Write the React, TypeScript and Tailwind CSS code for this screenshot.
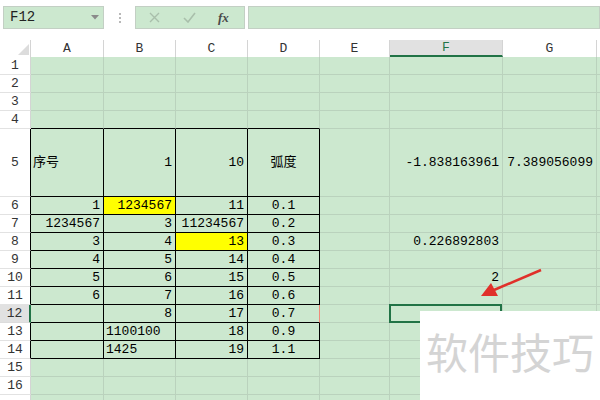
import React from "react";

type Cell = { t: string; a?: "l" | "r" | "c"; y?: boolean };

const cols = ["A", "B", "C", "D", "E", "F", "G"];
const font = { fontFamily: '"Liberation Mono", "Noto Sans CJK SC", monospace' };

const data: Record<number, Record<string, Cell>> = {
  5: { A: { t: "序号", a: "l" }, B: { t: "1" }, C: { t: "10" }, D: { t: "弧度", a: "c" }, F: { t: "-1.838163961" }, G: { t: "7.389056099" } },
  6: { A: { t: "1" }, B: { t: "1234567", y: true }, C: { t: "11" }, D: { t: "0.1", a: "c" } },
  7: { A: { t: "1234567" }, B: { t: "3" }, C: { t: "11234567" }, D: { t: "0.2", a: "c" } },
  8: { A: { t: "3" }, B: { t: "4" }, C: { t: "13", y: true }, D: { t: "0.3", a: "c" }, F: { t: "0.226892803" } },
  9: { A: { t: "4" }, B: { t: "5" }, C: { t: "14" }, D: { t: "0.4", a: "c" } },
  10: { A: { t: "5" }, B: { t: "6" }, C: { t: "15" }, D: { t: "0.5", a: "c" }, F: { t: "2" } },
  11: { A: { t: "6" }, B: { t: "7" }, C: { t: "16" }, D: { t: "0.6", a: "c" } },
  12: { B: { t: "8" }, C: { t: "17" }, D: { t: "0.7", a: "c" } },
  13: { B: { t: "1100100", a: "l" }, C: { t: "18" }, D: { t: "0.9", a: "c" } },
  14: { B: { t: "1425", a: "l" }, C: { t: "19" }, D: { t: "1.1", a: "c" } },
};

const rows = Array.from({ length: 17 }, (_, i) => i + 1);
const gridCols = "grid grid-cols-[31px_73px_72px_72px_72px_70px_113px_94px_1fr]";

function cellClass(r: number, ci: number, cell?: Cell) {
  const inTable = r >= 5 && r <= 14 && ci <= 3;
  const topEdge = r === 4 && ci <= 3;
  const align =
    cell?.a === "l" ? "justify-start pl-[2px]" : cell?.a === "c" ? "justify-center" : "justify-end pr-[3px]";
  const bg = cell?.y ? "bg-[#ffff00]" : "bg-[#cce8cf]";
  const right =
    r === 12 && ci === 3
      ? "border-r-[#f08a7a]"
      : inTable
        ? "border-r-black"
        : "border-r-[#bad2bd]";
  const bottom = inTable || topEdge ? "border-b-black" : "border-b-[#bad2bd]";
  return `relative flex items-center border-r border-b ${right} ${bottom} ${bg} ${align}`;
}

function Sheet() {
  return (
    <div className="text-[13px] leading-none text-black" style={font}>
      <div className={`${gridCols} h-[17px] bg-white text-[#333]`}>
        <div className="relative border-r border-[#d4d4d4]">
          <svg className="absolute left-[18px] top-[4px]" width="11" height="11" viewBox="0 0 11 11">
            <path d="M11 0 L11 11 L0 11 Z" fill="#dcdcdc" />
          </svg>
        </div>
        {cols.map((c) => (
          <div
            key={c}
            className={
              c === "F"
                ? "flex items-center justify-center border-r border-[#d4d4d4] border-b-2 border-b-[#217346] bg-[#e1e1e1] text-[#217346]"
                : "flex items-center justify-center border-r border-[#d4d4d4]"
            }
          >
            {c}
          </div>
        ))}
        <div />
      </div>
      {rows.map((r) => (
        <div key={r} className={`${gridCols} ${r === 5 ? "h-[68px]" : "h-[18px]"}`}>
          <div
            className={
              r === 12
                ? "flex items-center justify-center border-b border-b-[#dcdcdc] border-r-2 border-r-[#217346] bg-[#e1e1e1] text-[#333]"
                : r >= 5 && r <= 14
                  ? "flex items-center justify-center border-b border-b-[#e2e2e2] border-r border-r-black bg-white text-[#333]"
                  : "flex items-center justify-center border-b border-b-[#e2e2e2] border-r border-r-[#d4d4d4] bg-white text-[#333]"
            }
          >
            {r < 17 ? r : null}
          </div>
          {cols.map((c, ci) => {
            const cell = data[r]?.[c];
            return (
              <div key={c} className={cellClass(r, ci, cell)}>
                <span className="whitespace-nowrap">{cell?.t}</span>
                {r === 12 && c === "F" && (
                  <div className="absolute -left-[1px] -top-[1px] z-10 h-[calc(100%+2px)] w-[calc(100%+1px)] border-2 border-[#217346]" />
                )}
              </div>
            );
          })}
          <div className="border-b border-[#bad2bd] bg-[#cce8cf]" />
        </div>
      ))}
    </div>
  );
}

function FormulaBar() {
  return (
    <div className="flex h-[40px] items-start bg-white pl-[3px] pt-[6px]" style={font}>
      <div className="flex h-[23px] w-[101px] items-center justify-between border border-[#c3cfc4] bg-[#cce8cf] pl-[6px] pr-[4px] text-[14px] text-[#222]">
        <span>F12</span>
        <svg width="8" height="5" viewBox="0 0 8 5">
          <path d="M0 0 L8 0 L4 4.5 Z" fill="#8a8a8a" />
        </svg>
      </div>
      <div className="flex h-[23px] w-[31px] flex-col items-center justify-center gap-[2px]">
        <span className="h-[2px] w-[2px] bg-[#b8b8b8]" />
        <span className="h-[2px] w-[2px] bg-[#b8b8b8]" />
        <span className="h-[2px] w-[2px] bg-[#b8b8b8]" />
      </div>
      <div className="flex h-[23px] w-[110px] items-center border border-[#c3cfc4] bg-[#cce8cf]">
        <svg className="ml-[13px]" width="11" height="11" viewBox="0 0 11 11">
          <path d="M1 1 L10 10 M10 1 L1 10" stroke="#a9bfab" strokeWidth="1.4" />
        </svg>
        <svg className="ml-[23px]" width="13" height="11" viewBox="0 0 13 11">
          <path d="M1 6 L5 10 L12 1" stroke="#a9bfab" strokeWidth="1.6" fill="none" />
        </svg>
        <span
          className="ml-[22px] text-[13px] font-bold italic text-[#4a4a4a]"
          style={{ fontFamily: '"Liberation Serif", serif' }}
        >
          fx
        </span>
      </div>
      <div className="ml-[3px] h-[23px] flex-1 border border-[#c3cfc4] bg-[#cce8cf]" />
    </div>
  );
}

export default function App() {
  return (
    <div className="relative h-[400px] w-[600px] overflow-hidden bg-white">
      <FormulaBar />
      <Sheet />
      <svg className="pointer-events-none absolute inset-0 z-20" width="600" height="400">
        <line x1="541" y1="270" x2="494" y2="290" stroke="#e0302a" strokeWidth="2.5" />
        <path d="M481 296 L491 283 L498 296 Z" fill="#e0302a" />
      </svg>
      <div className="absolute left-[420px] top-[311px] z-20 h-[89px] w-[180px] bg-white pl-[6px] pt-[19px]">
        <span
          className="text-[42px] leading-none text-[#d4d4d4]"
          style={{ fontFamily: '"Noto Sans CJK SC", sans-serif' }}
        >
          软件技巧
        </span>
      </div>
    </div>
  );
}
